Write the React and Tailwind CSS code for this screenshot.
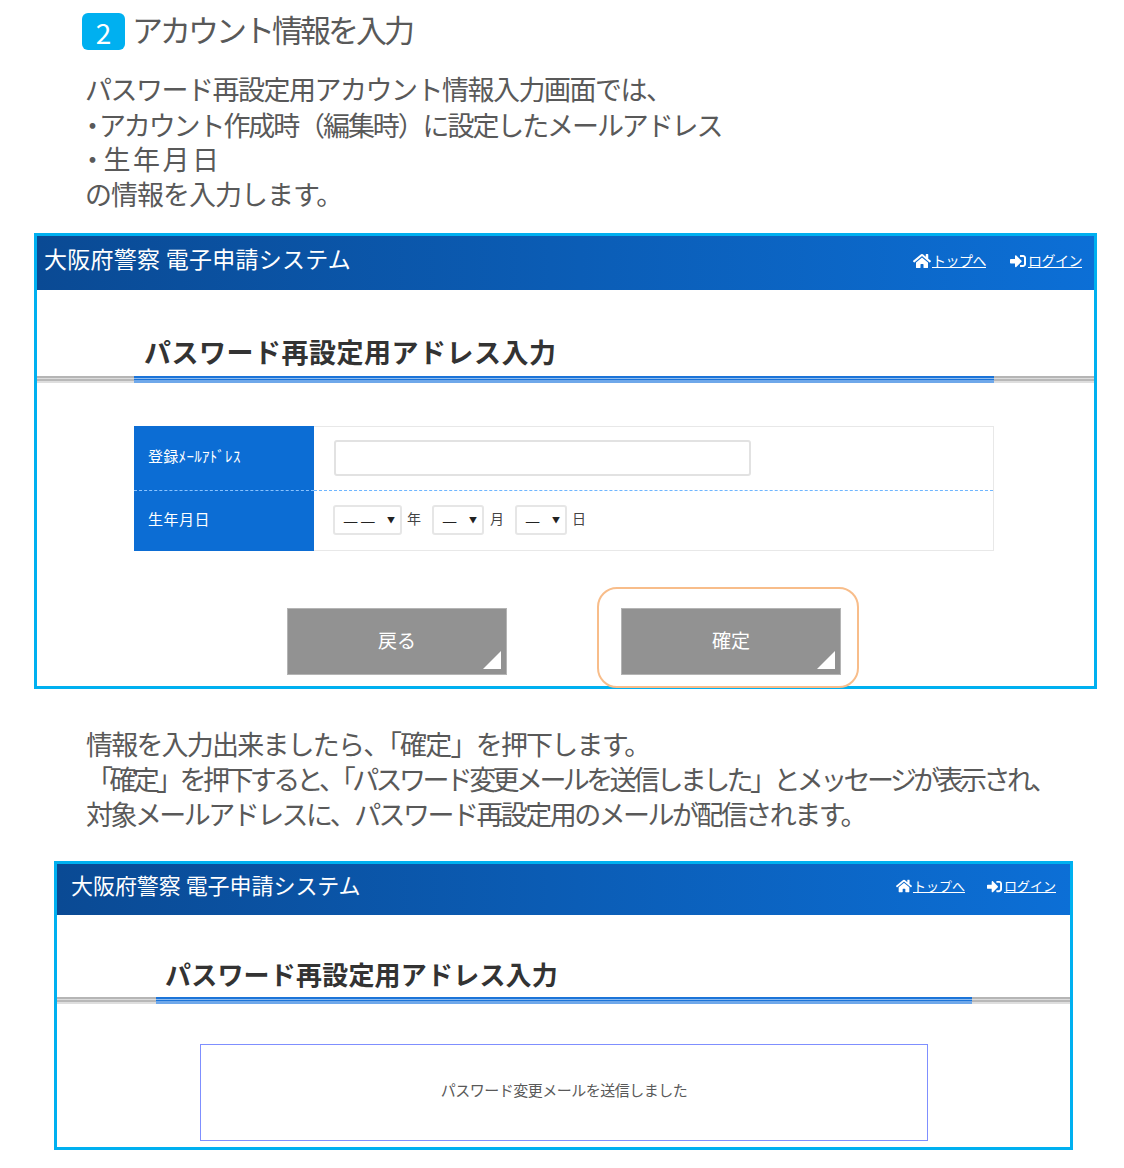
import React from 'react';
import { FaHome, FaSignInAlt } from 'react-icons/fa';

const grayStripe = 'bg-[linear-gradient(to_bottom,#b5b5b5_0,#b5b5b5_2px,#dcdcdc_2px,#dcdcdc_3px,#b8b8b8_3px,#b8b8b8_5px,#dedede_5px,#dedede_7px)]';
const blueStripe = 'bg-[linear-gradient(to_bottom,#1c74d8_0,#1c74d8_2px,#8fbcef_2px,#8fbcef_3px,#1c74d8_3px,#1c74d8_4px,#6fa8ea_4px,#6fa8ea_7px)]';

function Header({ big }) {
  return (
    <div className={`flex items-center justify-between bg-[linear-gradient(to_right,#0a4a94,#0c6fd6)] text-white ${big ? 'h-[54px] pb-[5px] pl-[7px] pr-[12px]' : 'h-[51px] pb-[7px] pl-[14px] pr-[14px]'}`}>
      <div className={`whitespace-nowrap ${big ? 'pb-[4px] text-[23px] tracking-[0.25px]' : 'pb-[4px] text-[22px] tracking-[-0.05px]'}`}>大阪府警察 電子申請システム</div>
      <div className={`flex items-center ${big ? 'gap-[24px] text-[14px] tracking-[-0.5px]' : 'gap-[22px] text-[13px]'}`}>
        <div className="flex items-center gap-[1px]">
          <FaHome className={big ? 'text-[18px]' : 'text-[16px]'} />
          <span className="underline">トップへ</span>
        </div>
        <div className="flex items-center gap-[2px]">
          <FaSignInAlt className={big ? 'text-[16px]' : 'text-[15px]'} />
          <span className="underline">ログイン</span>
        </div>
      </div>
    </div>
  );
}

function PageTitle({ big }) {
  return (
    <>
      <div className={`font-bold whitespace-nowrap text-[#333333] ${big ? 'h-[86px] pl-[107px] pt-[40px] text-[27px] leading-[44px] tracking-[0.5px]' : 'h-[82px] pl-[108px] pt-[37px] text-[26px] leading-[44px] tracking-[0.2px]'}`}>
        パスワード再設定用アドレス入力
      </div>
      <div className="flex h-[7px]">
        <div className={`${grayStripe} ${big ? 'w-[97px]' : 'w-[99px]'}`}></div>
        <div className={`${blueStripe} ${big ? 'w-[860px]' : 'w-[816px]'}`}></div>
        <div className={`grow ${grayStripe}`}></div>
      </div>
    </>
  );
}

function DateSelect({ width, dashes }) {
  return (
    <div className={`flex h-[30px] items-center justify-between rounded-[3px] border-2 border-[#e6e6e6] pl-[8px] pr-[5px] text-[#222222] ${width}`}>
      <span className="flex gap-[2px] text-[17px] leading-none">
        {dashes.map((dash, i) => (
          <span key={i}>{dash}</span>
        ))}
      </span>
      <span className="text-[8px] leading-none">▼</span>
    </div>
  );
}

function GrayButton({ children }) {
  return (
    <div className="relative flex h-[67px] w-[220px] items-center justify-center border border-[#b4b4b4] bg-[#929292] pb-[2px] text-[19px] text-white">
      {children}
      <div className="absolute bottom-[5px] right-[5px] h-[18px] w-[18px] bg-white [clip-path:polygon(100%_0,100%_100%,0_100%)]"></div>
    </div>
  );
}

function Dot() {
  return <span className="ml-[-6px] mr-[-5px]">・</span>;
}

export default function App() {
  return (
    <div className="h-[1168px] w-[1124px] overflow-hidden bg-white font-['Noto_Sans_CJK_JP',sans-serif] text-[#595959]">
      <div className="flex items-center gap-[7px] pl-[82px] pt-[13px]">
        <div className="flex h-[37px] w-[43px] items-center justify-center rounded-[6px] bg-[#00b0f0] text-[28px] leading-none text-white">2</div>
        <div className="whitespace-nowrap pb-[6px] text-[31px] leading-[31px] tracking-[-3px]">アカウント情報を入力</div>
      </div>

      <div className="mt-[21px] h-[162px] whitespace-nowrap pl-[85px] text-[27px] leading-[35px]">
        <div className="tracking-[-1.5px]">パスワード再設定用アカウント情報入力画面では、</div>
        <div className="mb-[-1px] pt-[1px] tracking-[-2.1px]"><Dot />アカウント作成時（編集時）に設定したメールアドレス</div>
        <div className="tracking-[2.5px]"><Dot />生年月日</div>
        <div className="tracking-[-1px]">の情報を入力します。</div>
      </div>

      <div className="ml-[34px] h-[456px] w-[1063px] border-[3px] border-[#00b0f0] bg-white">
        <Header big />
        <PageTitle big />

        <div className="ml-[97px] mt-[43px] w-[860px] border-r border-[#e8e8e8]">
          <div className="flex h-[65px]">
            <div className="flex w-[180px] items-center border-b border-dashed border-[#8cc4ff] bg-[#0c6dd4] pb-[4px] pl-[14px] text-[15px] tracking-[0.3px] text-white">登録ﾒｰﾙｱﾄﾞﾚｽ</div>
            <div className="flex grow items-center border-y border-t-[#e8e8e8] border-b-[#6fb6ff] pb-[1px] pl-[20px] [border-bottom-style:dashed]">
              <div className="h-[36px] w-[417px] rounded-[3px] border-2 border-[#e2e2e2]"></div>
            </div>
          </div>
          <div className="flex h-[60px]">
            <div className="flex w-[180px] items-center bg-[#0c6dd4] pb-[4px] pl-[14px] text-[15px] tracking-[0.5px] text-white">生年月日</div>
            <div className="flex grow items-center border-b border-[#e8e8e8] pb-[2px] pl-[19px] text-[14px] text-[#444444]">
              <DateSelect width="w-[69px]" dashes={['—', '—']} />
              <span className="ml-[5px] w-[25px] pb-[2px]">年</span>
              <DateSelect width="w-[52px]" dashes={['—']} />
              <span className="ml-[6px] w-[25px] pb-[2px]">月</span>
              <DateSelect width="w-[52px]" dashes={['—']} />
              <span className="ml-[5px] pb-[2px]">日</span>
            </div>
          </div>
        </div>

        <div className="ml-[250px] mt-[57px] flex gap-[114px]">
          <GrayButton>戻る</GrayButton>
          <div className="relative">
            <GrayButton>確定</GrayButton>
            <div className="absolute left-[-24px] top-[-21px] h-[101px] w-[262px] rounded-[20px] border-2 border-[#f8bd8a]"></div>
          </div>
        </div>
      </div>

      <div className="mt-[37px] h-[135px] whitespace-nowrap pl-[86px] text-[27px] leading-[35px]">
        <div className="tracking-[-1.8px]">情報を入力出来ましたら、「確定」を押下します。</div>
        <div className="tracking-[-3.6px]">「確定」を押下すると、「パスワード変更メールを送信しました」とメッセージが表示され、</div>
        <div className="tracking-[-2.55px]">対象メールアドレスに、パスワード再設定用のメールが配信されます。</div>
      </div>

      <div className="ml-[54px] h-[289px] w-[1019px] border-[3px] border-[#00b0f0] bg-white">
        <Header />
        <PageTitle />
        <div className="ml-[143px] mt-[40px] flex h-[97px] w-[728px] items-center justify-center border border-[#7f8fff] pb-[4px] text-[15px] tracking-[-0.5px]">
          パスワード変更メールを送信しました
        </div>
      </div>
    </div>
  );
}
